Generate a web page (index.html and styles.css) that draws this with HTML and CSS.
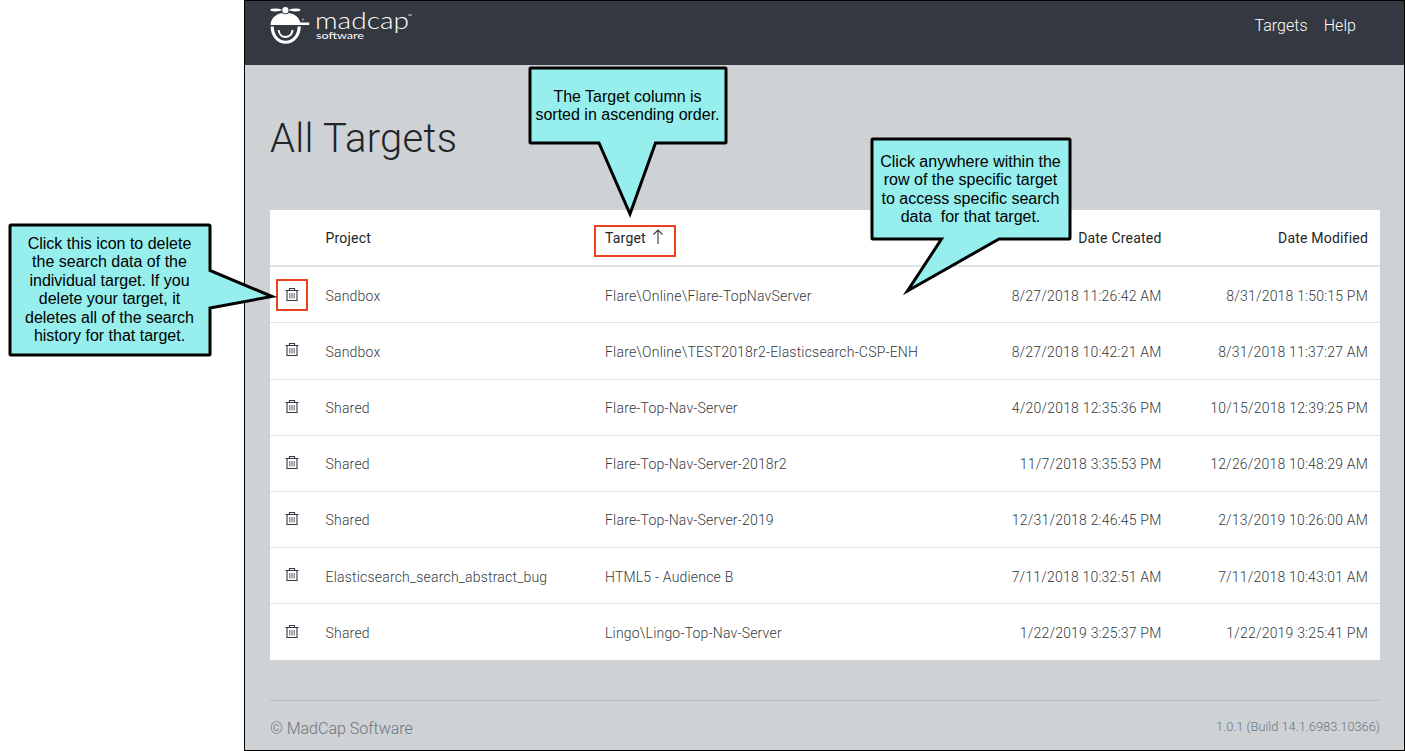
FILE: index.html
```html
<!DOCTYPE html>
<html lang="en">
<head>
<meta charset="utf-8">
<title>All Targets</title>
<link rel="stylesheet" href="styles.css">
</head>
<body>
<svg class="defs" aria-hidden="true">
  <symbol id="trash" viewBox="0 0 14 15">
    <path d="M0.5 3.5H13.5M4.5 3V1.5H9.5V3M2 4V13.5H12V4" fill="none" stroke="#343840" stroke-width="1.1"/>
    <path d="M4.8 6V11.5M7 6V11.5M9.2 6V11.5" fill="none" stroke="#555b66" stroke-width="1"/>
  </symbol>
</svg>
<div class="app">
  <header class="topbar">
    <svg class="logo" viewBox="0 0 146 40" width="146" height="40">
      <g fill="#fff">
        <path d="M0.6 18V17C1.2 10.6 7.4 5.8 15.5 5.8S28.8 9.6 30.4 15.6H39.2V17.9H0.6Z"/>
        <ellipse cx="5.3" cy="3" rx="5" ry="1.4"/>
        <ellipse cx="25.5" cy="3" rx="5" ry="1.4"/>
        <path d="M5 2.3H26V3.7H5Z"/>
        <circle cx="15.4" cy="3.2" r="4" fill="#343840"/>
        <circle cx="15.4" cy="3.2" r="3.1"/>
        <circle cx="33" cy="12.6" r="1.1" fill="#8f9399"/>
      </g>
      <path d="M2.2 19.6C2.2 28.6 8 35.3 15.6 35.3S29.2 28.6 29.2 19.6" fill="none" stroke="#fff" stroke-width="3.1"/>
      <path d="M8.6 23C9.6 32.4 21.4 32.4 22.6 23" fill="none" stroke="#fff" stroke-width="2"/>
      <text class="name" x="45" y="22" textLength="94" lengthAdjust="spacingAndGlyphs">madcap</text>
      <text class="tm" x="138" y="11">™</text>
      <text class="sub" x="46" y="32" textLength="48" lengthAdjust="spacingAndGlyphs">software</text>
    </svg>
    <nav class="nav"><a>Targets</a><a>Help</a></nav>
  </header>
  <main class="content">
    <h1>All Targets</h1>
    <div class="table">
      <div class="row head"><span></span><span>Project</span><span class="sorted">Target<svg class="arrow" viewBox="0 0 12 16" width="12" height="16"><path d="M6 15V1M1.5 5.5L6 1L10.5 5.5" fill="none" stroke="#343840" stroke-width="1.1"/></svg></span><span class="date">Date Created</span><span class="date">Date Modified</span></div>
      <div class="row first"><span class="del marked"><svg><use href="#trash"/></svg></span><span>Sandbox</span><span>Flare\Online\Flare-TopNavServer</span><span class="date">8/27/2018 11:26:42 AM</span><span class="date">8/31/2018 1:50:15 PM</span></div>
      <div class="row"><span class="del"><svg><use href="#trash"/></svg></span><span>Sandbox</span><span>Flare\Online\TEST2018r2-Elasticsearch-CSP-ENH</span><span class="date">8/27/2018 10:42:21 AM</span><span class="date">8/31/2018 11:37:27 AM</span></div>
      <div class="row"><span class="del"><svg><use href="#trash"/></svg></span><span>Shared</span><span>Flare-Top-Nav-Server</span><span class="date">4/20/2018 12:35:36 PM</span><span class="date">10/15/2018 12:39:25 PM</span></div>
      <div class="row"><span class="del"><svg><use href="#trash"/></svg></span><span>Shared</span><span>Flare-Top-Nav-Server-2018r2</span><span class="date">11/7/2018 3:35:53 PM</span><span class="date">12/26/2018 10:48:29 AM</span></div>
      <div class="row"><span class="del"><svg><use href="#trash"/></svg></span><span>Shared</span><span>Flare-Top-Nav-Server-2019</span><span class="date">12/31/2018 2:46:45 PM</span><span class="date">2/13/2019 10:26:00 AM</span></div>
      <div class="row low"><span class="del"><svg><use href="#trash"/></svg></span><span>Elasticsearch_search_abstract_bug</span><span>HTML5 - Audience B</span><span class="date">7/11/2018 10:32:51 AM</span><span class="date">7/11/2018 10:43:01 AM</span></div>
      <div class="row low"><span class="del"><svg><use href="#trash"/></svg></span><span>Shared</span><span>Lingo\Lingo-Top-Nav-Server</span><span class="date">1/22/2019 3:25:37 PM</span><span class="date">1/22/2019 3:25:41 PM</span></div>
    </div>
    <footer class="footer"><span>© MadCap Software</span><span class="build">1.0.1 (Build 14.1.6983.10366)</span></footer>
  </main>
</div>

<div class="callout callout-sort">
  <svg viewBox="528 66 200 152" width="200" height="152"><path d="M531 68H725Q726 68 726 69V142Q726 143 725 143H655.5L630 214L599 143H531Q530 143 530 142V69Q530 68 531 68Z"/></svg>
  <p>The Target column is<br>sorted in ascending order.</p>
</div>
<div class="callout callout-row">
  <svg viewBox="870 136 202 160" width="202" height="160"><path d="M873 139H1069Q1070 139 1070 140V238Q1070 239 1069 239H999L907.5 291L941.5 239H873Q872 239 872 238V140Q872 139 873 139Z"/></svg>
  <p>Click anywhere within the<br>row of the specific target<br>to access specific search<br>data&nbsp; for that target.</p>
</div>
<div class="callout callout-delete">
  <svg viewBox="8 223 270 134" width="270" height="134"><path d="M11 225H209Q210 225 210 226V270.5L272 296.5L210 308V354Q210 355 209 355H11Q10 355 10 354V226Q10 225 11 225Z"/></svg>
  <p>Click this icon to delete<br>the search data of the<br>individual target. If you<br>delete your target, it<br>deletes all of the search<br>history for that target.</p>
</div>
</body>
</html>
```
FILE: styles.css
```css
* { box-sizing: border-box; }
body {
  margin: 0;
  height: 751px;
  overflow: hidden;
  background: #fff;
  font-family: Roboto, sans-serif;
  font-weight: 300;
  color: #212529;
}
.defs { display: none; }
.app {
  width: 1161px;
  height: 751px;
  margin-left: 244px;
  border: 1px solid #000;
  background: #ced2d5;
}
.topbar {
  display: flex;
  justify-content: space-between;
  height: 64px;
  padding: 6px 48px 0 25px;
  background: #343840;
  color: #fff;
}
.logo { display: block; overflow: visible; }
.logo text { fill: #fff; }
.name { font: 300 24px Lato, sans-serif; }
.tm { font: 5px "Open Sans", sans-serif; }
.sub { font: 400 10px Lato, sans-serif; }
.nav { display: flex; gap: 16px; font-size: 16px; line-height: 24px; padding-top: 7px; letter-spacing: 0.05px; }
.content { padding: 0 24px 0 25px; }
h1 {
  margin: 0;
  height: 145px;
  padding-top: 50px;
  font-size: 40px;
  line-height: 48px;
  font-weight: 300;
  letter-spacing: 0.27px;
}
.table {
  display: grid;
  grid-template-rows: 57px 56px 57px repeat(5, 56px);
  background: #fff;
  font-size: 14px;
  letter-spacing: 0.2px;
  color: #343a40;
}
.row {
  display: grid;
  grid-template-columns: 43.5px 279.5px 1fr 190px 206.5px;
  align-items: center;
  padding: 1px 12px 0 12px;
  border-bottom: 1px solid #dee2e6;
}
.row.first { padding-top: 3px; }
.row.low { padding-top: 2px; }
.row:last-child { border-bottom: 0; }
.head {
  border-bottom-width: 2px;
  font-weight: 400;
  color: #212529;
}
.date { text-align: right; }
.del {
  display: flex;
  align-items: center;
  justify-content: center;
  width: 32px;
  height: 32px;
  margin: -2px 0 0 -6px;
}
.del svg { width: 14px; height: 15px; margin-top: -2px; }
.marked { border: 2px solid #e8421f; }
.sorted {
  display: flex;
  gap: 6px;
  justify-self: start;
  align-items: center;
  width: 82px;
  height: 32px;
  margin: 6px 0 0 -11px;
  padding: 0 0 6px 9px;
  border: 2px solid #e8421f;
}
.arrow { margin-top: -3px; }
.footer {
  display: flex;
  justify-content: space-between;
  margin-top: 40px;
  padding-top: 16px;
  border-top: 1px solid #b8bdc1;
  font-size: 16px;
  line-height: 24px;
  color: #6c757d;
}
.build { font-size: 12.8px; line-height: 20px; }
.callout { position: absolute; }
.callout svg { display: block; overflow: visible; }
.callout path { fill: #96efed; stroke: #000; stroke-width: 3; stroke-miterlimit: 10; }
.callout p {
  position: absolute;
  top: 0;
  left: 0;
  margin: 0;
  font: 16px/18.4px "Liberation Sans", Arial, sans-serif;
  color: #000;
  text-align: center;
  white-space: nowrap;
}
.callout-sort { left: 528px; top: 66px; }
.callout-sort p { width: 199px; top: 22px; }
.callout-row { left: 870px; top: 136px; }
.callout-row p { width: 201px; top: 17px; }
.callout-delete { left: 8px; top: 223px; }
.callout-delete p { width: 203px; top: 12px; }
```
